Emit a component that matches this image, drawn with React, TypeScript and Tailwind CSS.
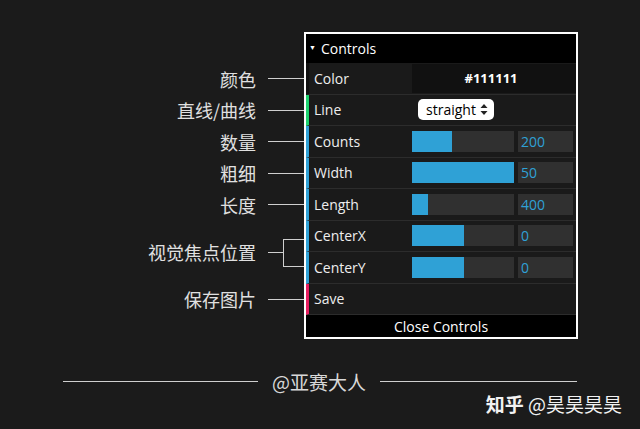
import React from "react";

const cjk = { fontFamily: '"Noto Sans CJK SC", "Noto Sans", sans-serif' };
const ui = { fontFamily: '"Open Sans", "Noto Sans", sans-serif' };

function LeftLabel({ text }: { text: string }) {
  return (
    <div className="h-[31.5px] flex items-center justify-end">
      <span className="text-[18px] text-[#e0e0e0] leading-none" style={cjk}>
        {text}
      </span>
      <div className="w-[36px] h-px bg-[#cfcfcf] ml-[12px]" />
    </div>
  );
}

function Slider({ pct, value }: { pct: number; value: string }) {
  return (
    <div className="flex items-center gap-[4px] flex-1 pr-[3px]">
      <div className="w-[102px] h-[21px] bg-[#303030]">
        <div className="h-full bg-[#2fa1d6]" style={{ width: `${pct}%` }} />
      </div>
      <div className="flex-1 h-[21px] bg-[#303030] text-[#2fa1d6] text-[14px] leading-[21px] pl-[3px]">
        {value}
      </div>
    </div>
  );
}

function Row({
  label,
  stripe,
  children,
}: {
  label: string;
  stripe: string;
  children?: React.ReactNode;
}) {
  return (
    <div
      className={`h-[31.5px] flex items-center bg-[#1a1a1a] border-b border-[#2c2c2c] border-l-[3px] ${stripe}`}
    >
      <div className="w-[103px] pl-[5px] text-[14px] font-medium text-[#eeeeee]">{label}</div>
      {children}
    </div>
  );
}

export default function App() {
  return (
    <div className="w-[640px] h-[429px] bg-[#1b1b1b] overflow-hidden flex flex-col" style={ui}>
      <div className="flex pt-[32px]">
        <div className="w-[304px] flex flex-col pt-[31px]">
          <LeftLabel text="颜色" />
          <LeftLabel text="直线/曲线" />
          <LeftLabel text="数量" />
          <LeftLabel text="粗细" />
          <LeftLabel text="长度" />
          <div className="h-[63px] flex items-center justify-end">
            <span className="text-[18px] text-[#e0e0e0] leading-none" style={cjk}>
              视觉焦点位置
            </span>
            <div className="w-[15px] h-px bg-[#cfcfcf] ml-[12px]" />
            <div className="w-[21px] h-[28px] border border-r-0 border-[#cfcfcf] mb-[-1px]" />
          </div>
          <LeftLabel text="保存图片" />
        </div>
        <div className="w-[274px] h-[307px] border-2 border-white bg-black flex flex-col">
          <div className="h-[29px] flex items-center bg-black text-white text-[14px] font-medium">
            <span className="text-[7px] ml-[3px] mr-[5px]">▼</span>
            <span>Controls</span>
          </div>
          <Row label="Color" stripe="border-l-[#111111]">
            <div className="flex-1 h-[29px] bg-[#111111] flex items-center justify-center pr-[6px] text-white text-[13px] font-bold">
              #111111
            </div>
          </Row>
          <Row label="Line" stripe="border-l-[#1ed36f]">
            <div className="ml-[6px] h-[21px] w-[76px] rounded-[5px] bg-white flex items-center pl-[8px] text-black text-[14px]">
              straight
              <svg width="8" height="11" viewBox="0 0 8 11" className="ml-[4px]">
                <path d="M4 0 L7.5 4 L0.5 4 Z M4 11 L7.5 7 L0.5 7 Z" fill="#222" />
              </svg>
            </div>
          </Row>
          <Row label="Counts" stripe="border-l-[#2fa1d6]">
            <Slider pct={39} value="200" />
          </Row>
          <Row label="Width" stripe="border-l-[#2fa1d6]">
            <Slider pct={100} value="50" />
          </Row>
          <Row label="Length" stripe="border-l-[#2fa1d6]">
            <Slider pct={16} value="400" />
          </Row>
          <Row label="CenterX" stripe="border-l-[#2fa1d6]">
            <Slider pct={51} value="0" />
          </Row>
          <Row label="CenterY" stripe="border-l-[#2fa1d6]">
            <Slider pct={51} value="0" />
          </Row>
          <Row label="Save" stripe="border-l-[#e61d5f]" />
          <div className="flex-1 bg-black flex items-center justify-center text-white text-[14px] font-medium">
            Close Controls
          </div>
        </div>
      </div>
      <div className="flex items-center mt-[30px] h-[24px]">
        <div className="ml-[63px] w-[195px] h-px bg-[#cfcfcf]" />
        <span className="mx-[14px] text-[19px] text-[#d8d8d8] leading-none" style={cjk}>
          @亚赛大人
        </span>
        <div className="w-[197px] h-px bg-[#cfcfcf]" />
      </div>
      <div className="flex justify-end pr-[18px] mt-[1px]">
        <span className="text-[19px] text-[#f2f2f2] leading-none" style={cjk}>
          <span className="font-bold">知乎</span> @昊昊昊昊
        </span>
      </div>
    </div>
  );
}
